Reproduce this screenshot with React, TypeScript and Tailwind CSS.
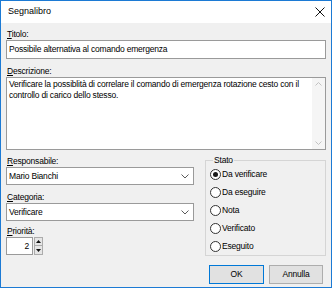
import React from "react";

const Label = ({ h, letter, rest }: { h: string; letter: string; rest: string }) => (
  <div className={`${h} flex items-end leading-[12px] pl-[1px]`}>
    <span>
      <span className="underline underline-offset-[1px]">{letter}</span>
      {rest}
    </span>
  </div>
);

const Chevron = () => (
  <svg width="8" height="5" viewBox="0 0 8 5" className="shrink-0">
    <path d="M0.5 0.5 L4 4 L7.5 0.5" fill="none" stroke="#5a5a5a" strokeWidth="1" />
  </svg>
);

const Select = ({ value }: { value: string }) => (
  <div className="h-[18px] bg-white border border-[#9a9a9a] flex items-center justify-between pl-[2px] pr-[4px]">
    <span>{value}</span>
    <Chevron />
  </div>
);

const Radio = ({ label, checked }: { label: string; checked?: boolean }) => (
  <div className="h-[18px] flex items-center gap-[1px]">
    <div className="w-[11px] h-[11px] rounded-full border border-[#333333] bg-white flex items-center justify-center">
      {checked && <div className="w-[5px] h-[5px] rounded-full bg-[#1a1a1a]" />}
    </div>
    <span>{label}</span>
  </div>
);

const App = () => {
  return (
    <div className="w-[332px] h-[288px] border border-[#1c7ad4] bg-[#f0f0f0] flex flex-col text-[8.5px] tracking-[-0.2px] text-black font-['Liberation_Sans',Arial,sans-serif]">
      {/* Title bar */}
      <div className="h-[22px] bg-white flex items-center justify-between pl-[7px] pr-[6px]">
        <span className="text-[9px] tracking-normal">Segnalibro</span>
        <svg width="10" height="10" viewBox="0 0 10 10">
          <path d="M0.5 0.5 L9.5 9.5 M9.5 0.5 L0.5 9.5" stroke="#111111" strokeWidth="1" />
        </svg>
      </div>

      <div className="flex flex-col px-[5px]">
        <Label h="h-[17px]" letter="T" rest="itolo:" />
        <div className="h-[19px] bg-white border border-[#9a9a9a] flex items-center pl-[2px]">
          Possibile alternativa al comando emergenza
        </div>

        <Label h="h-[18px]" letter="D" rest="escrizione:" />
        <div className="h-[73px] bg-white border border-[#9a9a9a] flex">
          <div className="flex-1 pl-[2px] pt-[1px] leading-[11px]">
            Verificare la possiblità di correlare il comando di emergenza rotazione cesto con il
            controllo di carico dello stesso.
          </div>
          <div className="w-[13px] bg-[#f5f5f5] flex flex-col items-center justify-between py-[4px]">
            <svg width="7" height="4" viewBox="0 0 7 4">
              <path d="M0.5 3.5 L3.5 0.5 L6.5 3.5" fill="none" stroke="#c2c2c2" strokeWidth="1" />
            </svg>
            <svg width="7" height="4" viewBox="0 0 7 4">
              <path d="M0.5 0.5 L3.5 3.5 L6.5 0.5" fill="none" stroke="#c2c2c2" strokeWidth="1" />
            </svg>
          </div>
        </div>

        <div className="flex">
          {/* Left column */}
          <div className="w-[188px] flex flex-col">
            <Label h="h-[17px]" letter="R" rest="esponsabile:" />
            <Select value="Mario Bianchi" />
            <Label h="h-[18px]" letter="C" rest="ategoria:" />
            <Select value="Verificare" />
            <Label h="h-[16px]" letter="P" rest="riorità:" />
            <div className="flex h-[18px]">
              <div className="w-[27px] bg-white border border-[#9a9a9a] flex items-center justify-end pr-[3px]">
                2
              </div>
              <div className="w-[9px] ml-[1px] flex flex-col">
                <div className="h-[9px] bg-[#e6e6e6] border border-[#acacac] flex items-center justify-center">
                  <svg width="5" height="3" viewBox="0 0 5 3">
                    <path d="M0 3 L2.5 0 L5 3 Z" fill="#111111" />
                  </svg>
                </div>
                <div className="h-[9px] bg-[#e6e6e6] border border-[#acacac] border-t-0 flex items-center justify-center">
                  <svg width="5" height="3" viewBox="0 0 5 3">
                    <path d="M0 0 L2.5 3 L5 0 Z" fill="#111111" />
                  </svg>
                </div>
              </div>
            </div>
          </div>

          {/* Stato group */}
          <fieldset className="flex-1 ml-[11px] mt-[4px] border border-[#d5d5d5] pl-[4px] h-[102px]">
            <legend className="ml-[3px] px-[1px] leading-[12px]">Stato</legend>
            <div className="flex flex-col -mt-[1px]">
              <Radio label="Da verificare" checked />
              <Radio label="Da eseguire" />
              <Radio label="Nota" />
              <Radio label="Verificato" />
              <Radio label="Eseguito" />
            </div>
          </fieldset>
        </div>

        {/* Buttons */}
        <div className="flex justify-end gap-[5px] mt-[9px] mr-[3px]">
          <button className="w-[55px] h-[19px] bg-[#e1e1e1] border border-[#0078d7] flex items-center justify-center">
            OK
          </button>
          <button className="w-[54px] h-[19px] bg-[#e1e1e1] border border-[#adadad] flex items-center justify-center">
            Annulla
          </button>
        </div>
      </div>
    </div>
  );
};

export default App;
